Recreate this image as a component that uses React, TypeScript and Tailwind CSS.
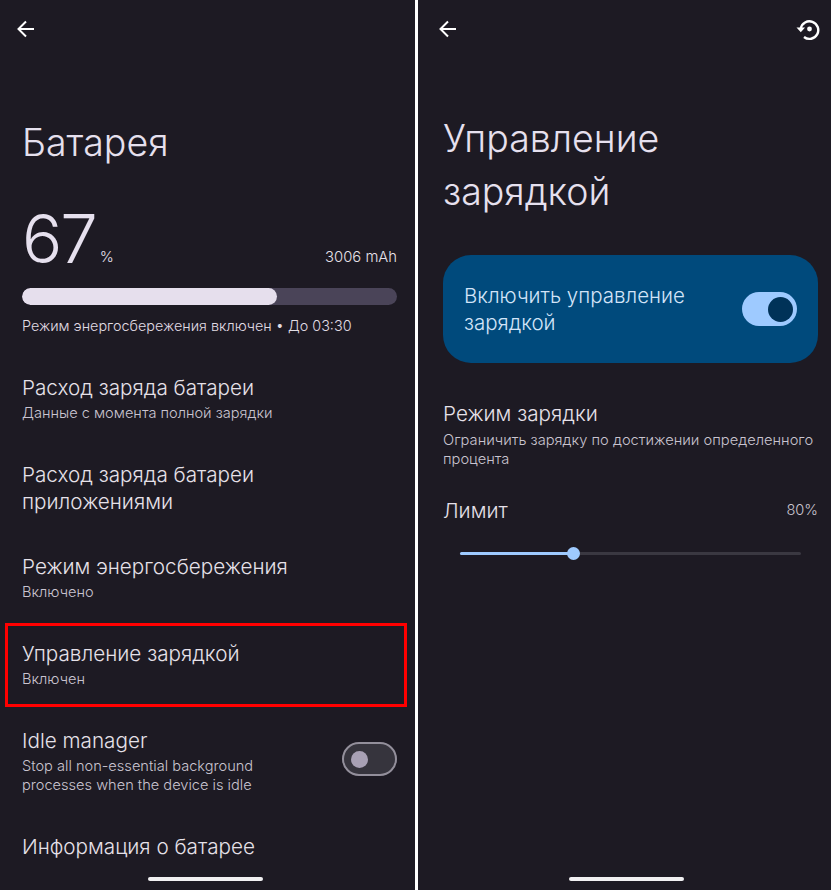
import React from "react";

function Back() {
  return (
    <svg width="24" height="24" viewBox="0 0 24 24" fill="none" stroke="#ffffff" strokeWidth="2">
      <path d="M20 12H5.500M12 4.500 4.500 12l7.500 7.500" />
    </svg>
  );
}

function Restore() {
  return (
    <svg width="24" height="24" viewBox="0 0 24 24" fill="none" stroke="#ffffff" strokeWidth="2.400">
      <path d="M4.800 11.500A8.800 8.800 0 1 1 8 20" />
      <path d="M0.500 10.500h8.500L4.800 15.300z" fill="#ffffff" stroke="none" />
      <circle cx="13.500" cy="12" r="2.400" fill="#ffffff" stroke="none" />
    </svg>
  );
}

function Row({ title, sub, mt }: { title: React.ReactNode; sub?: React.ReactNode; mt: string }) {
  return (
    <div className={mt}>
      <div className="text-[20.7px] leading-[27px] text-[#e6e1e9] font-light">{title}</div>
      {sub && <div className="mt-[3px] text-[14.6px] leading-[19px] text-[#c9c4d0] font-light">{sub}</div>}
    </div>
  );
}

export default function App() {
  return (
    <div className="flex w-[831px] h-[890px] overflow-hidden bg-white font-['Inter','Noto_Sans',sans-serif]">
      <div className="relative w-[415px] h-full bg-[#1d1a23] pl-[22px] pr-[18px]">
        <div className="h-[56px] pt-[17px] -ml-[8px]"><Back /></div>
        <div className="mt-[65px] text-[37.5px] leading-[44px] text-[#e6e0ee] font-light">Батарея</div>
        <div className="mt-[34px] flex items-end justify-between h-[80px]">
          <div className="flex items-end">
            <span className="text-[67px] leading-[80px] tracking-[-2px] text-[#e6e0ee] font-light">67</span>
            <span className="ml-[4px] mb-[13px] text-[15px] leading-[18px] text-[#e6e0ee] font-light">%</span>
          </div>
          <span className="mb-[13px] text-[14.8px] leading-[18px] text-[#e6e1e9] font-light">3006 mAh</span>
        </div>
        <div className="mt-[9px] h-[17px] rounded-full bg-[#4a4458] overflow-hidden">
          <div className="h-full w-[68%] rounded-full bg-[#e6dfed]" />
        </div>
        <div className="mt-[11px] text-[14.4px] leading-[19px] text-[#e0dce4] font-light">Режим энергосбережения включен • До 03:30</div>
        <Row mt="mt-[38.5px]" title="Расход заряда батареи" sub="Данные с момента полной зарядки" />
        <Row mt="mt-[38px]" title={<>Расход заряда батареи<br />приложениями</>} />
        <Row mt="mt-[38px]" title="Режим энергосбережения" sub="Включено" />
        <div className="relative">
          <Row mt="mt-[38px]" title="Управление зарядкой" sub="Включен" />
          <div className="absolute left-[-17px] right-[-10px] top-[-16.5px] h-[84px] border-[3px] border-[#ff0000]" />
        </div>
        <div className="mt-[38px] flex items-center justify-between">
          <Row mt="mt-0" title="Idle manager" sub={<>Stop all non-essential background<br />processes when the device is idle</>} />
          <div className="-mt-[3px] flex items-center w-[55px] h-[34px] rounded-full border-[2px] border-[#938f9b] bg-[#36343d] pl-[7px]">
            <div className="w-[17px] h-[17px] rounded-full bg-[#a8a0b4]" />
          </div>
        </div>
        <Row mt="mt-[38px]" title="Информация о батарее" />
        <div className="absolute left-[148px] top-[877px] w-[115px] h-[4px] rounded-full bg-[#f1f0f2]" />
      </div>
      <div className="w-[2.5px]" />
      <div className="relative flex-1 h-full bg-[#1d1a23] pl-[25.5px] pr-[11px]">
        <div className="h-[56px] pt-[17px] -ml-[7px] flex justify-between">
          <Back />
          <Restore />
        </div>
        <div className="mt-[56px] text-[37.5px] leading-[53px] text-[#e6e0ee] font-light">Управление<br />зарядкой</div>
        <div className="mt-[37px] mr-[2px] flex items-center justify-between h-[108px] rounded-[28px] bg-[#004a7c] pl-[21px] pr-[21px]">
          <div className="text-[20.5px] leading-[27px] text-[#d3e4f8] font-light">Включить управление<br />зарядкой</div>
          <div className="flex items-center justify-end w-[55px] h-[34px] rounded-full bg-[#9ecaff] pr-[4px]">
            <div className="w-[25px] h-[25px] rounded-full bg-[#003258]" />
          </div>
        </div>
        <div className="mt-[37px] text-[20.7px] leading-[27px] text-[#e6e1e9] font-light">Режим зарядки</div>
        <div className="mt-[4px] text-[14.7px] leading-[19px] text-[#c9c4d0] font-light">Ограничить зарядку по достижении определенного<br />процента</div>
        <div className="mt-[28px] mr-[2px] flex items-center justify-between">
          <span className="text-[20.7px] leading-[27px] text-[#e6e1e9] font-light">Лимит</span>
          <span className="text-[14.6px] leading-[19px] text-[#c9c4d0] font-light">80%</span>
        </div>
        <div className="relative mt-[28px] ml-[17px] mr-[19px] h-[3px] bg-[#3a3841] rounded-full">
          <div className="h-full w-[33%] rounded-full bg-[#9ecaff]" />
          <div className="absolute left-[107px] top-[-5px] w-[13px] h-[13px] rounded-full bg-[#9ecaff]" />
        </div>
        <div className="absolute left-[151px] top-[877px] w-[115px] h-[4px] rounded-full bg-[#f1f0f2]" />
      </div>
    </div>
  );
}
